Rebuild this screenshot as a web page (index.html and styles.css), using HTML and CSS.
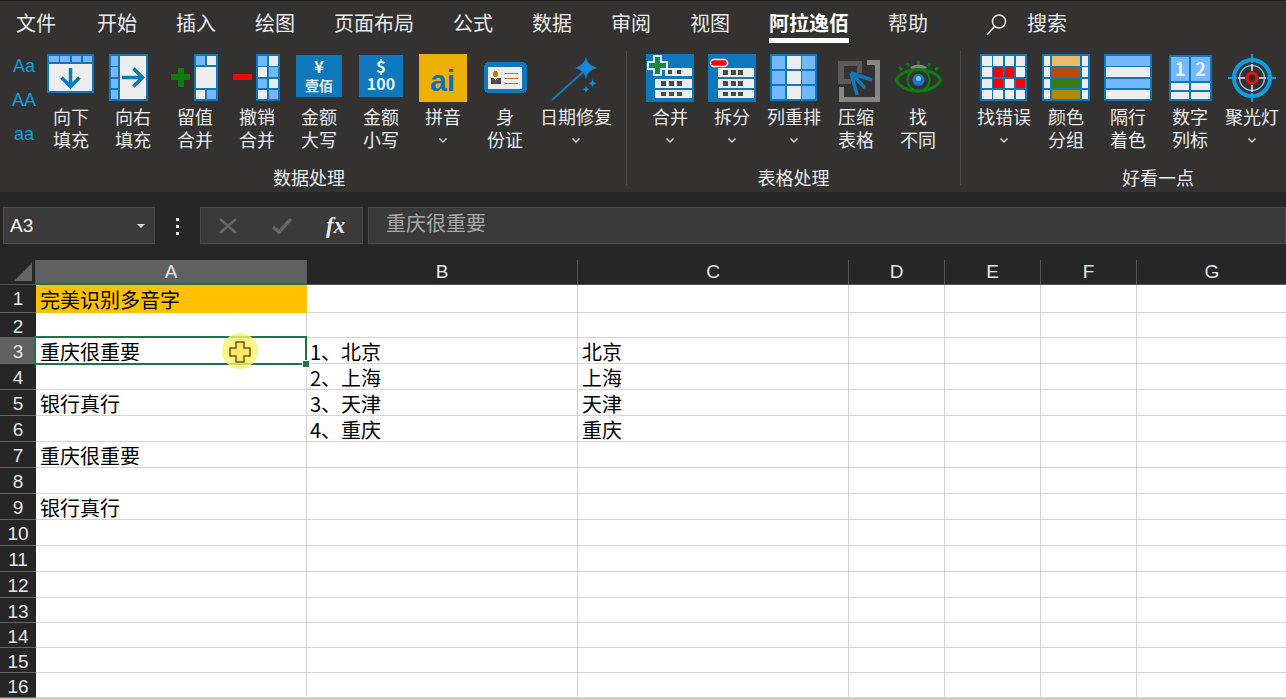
FILE: index.html
```html
<!DOCTYPE html>
<html lang="zh-CN">
<head>
  <meta charset="UTF-8">
  <title>Excel</title>
  <link rel="stylesheet" href="styles.css">
</head>
<body>
  <header class="ribbon">
    <nav class="tabs">
      <span class="tab tab-first">文件</span>
      <span class="tab">开始</span>
      <span class="tab">插入</span>
      <span class="tab">绘图</span>
      <span class="tab">页面布局</span>
      <span class="tab">公式</span>
      <span class="tab">数据</span>
      <span class="tab">审阅</span>
      <span class="tab">视图</span>
      <span class="tab tab-active">阿拉逸佰</span>
      <span class="tab">帮助</span>
      <span class="search">
        <svg class="search-icon" width="21" height="23" viewBox="0 0 21 23"><circle cx="13" cy="8.5" r="6.5"/><path d="M8.5 13.5 1 22"/></svg>
        <span class="tab">搜索</span>
      </span>
    </nav>

    <div class="groups">
      <section class="group group-data">
        <div class="items">
          <div class="case-stack"><span>Aa</span><span>AA</span><span>aa</span></div>

          <div class="item">
            <svg class="icon" viewBox="0 0 48 48">
              <rect class="ib" width="47" height="39"/>
              <rect class="is" x="2" y="2" width="10" height="6"/><rect class="is" x="13" y="2" width="10" height="6"/><rect class="is" x="25" y="2" width="9" height="6"/><rect class="is" x="36" y="2" width="9" height="6"/>
              <rect class="ip" x="2" y="10" width="43" height="27"/>
              <path class="arrow" d="M23.5 14V32M14.5 23.5 23.5 32.5 32.5 23.5"/>
            </svg>
            <div class="label">向下<br>填充</div>
          </div>

          <div class="item">
            <svg class="icon" viewBox="0 0 48 48">
              <rect class="ib" width="39" height="47"/>
              <rect class="is" x="2" y="2" width="7" height="10"/><rect class="is" x="2" y="13" width="7" height="10"/><rect class="is" x="2" y="25" width="7" height="9"/><rect class="is" x="2" y="36" width="7" height="9"/>
              <rect class="ip" x="11" y="2" width="26" height="43"/>
              <path class="arrow" d="M13 23.5H33M24.5 14.5 33.5 23.5 24.5 32.5"/>
            </svg>
            <div class="label">向右<br>填充</div>
          </div>

          <div class="item">
            <svg class="icon" viewBox="0 0 48 48">
              <rect class="ig" x="7" y="14" width="6" height="19"/><rect class="ig" y="20" width="19" height="6"/>
              <rect class="ib" x="23" width="24" height="47"/>
              <rect class="is" x="25" y="2" width="9" height="9"/><rect class="ip" x="36" y="2" width="9" height="9"/>
              <rect class="ip" x="25" y="13" width="20" height="21"/>
              <rect class="ip" x="25" y="36" width="9" height="9"/><rect class="is" x="36" y="36" width="9" height="9"/>
            </svg>
            <div class="label">留值<br>合并</div>
          </div>

          <div class="item">
            <svg class="icon" viewBox="0 0 48 48">
              <rect class="ir" y="20" width="19" height="6"/>
              <rect class="ib" x="23" width="24" height="47"/>
              <rect class="is" x="25" y="2" width="9" height="10"/><rect class="ip" x="36" y="2" width="9" height="10"/>
              <rect class="ip" x="25" y="13" width="9" height="10"/><rect class="is" x="36" y="13" width="9" height="10"/>
              <rect class="is" x="25" y="25" width="9" height="9"/><rect class="ip" x="36" y="25" width="9" height="9"/>
              <rect class="ip" x="25" y="36" width="9" height="9"/><rect class="is" x="36" y="36" width="9" height="9"/>
            </svg>
            <div class="label">撤销<br>合并</div>
          </div>

          <div class="item">
            <svg class="icon" viewBox="0 0 48 48">
              <rect class="ib" x="1" y="1" width="46" height="42"/>
              <text class="icon-text" x="24" y="19" font-size="17">¥</text>
              <text class="icon-text" x="24" y="37" font-size="14">壹佰</text>
            </svg>
            <div class="label">金额<br>大写</div>
          </div>

          <div class="item">
            <svg class="icon" viewBox="0 0 48 48">
              <rect class="ib" x="2" y="1" width="44" height="42"/>
              <text class="icon-text" x="24" y="19" font-size="17">$</text>
              <text class="icon-text" x="24" y="36" font-size="16">100</text>
            </svg>
            <div class="label">金额<br>小写</div>
          </div>

          <div class="item">
            <svg class="icon" viewBox="0 0 48 48">
              <rect class="iy" width="48" height="48"/>
              <text class="ai-text" x="23.5" y="37" font-size="30">ai</text>
            </svg>
            <div class="label">拼音</div>
            <svg class="chevron" viewBox="0 0 8 5"><path d="M.5.5 4 4 7.5.5"/></svg>
          </div>

          <div class="item">
            <svg class="icon" viewBox="0 0 48 48">
              <rect class="ib" x="3" y="8" width="43" height="31" rx="5"/>
              <rect class="ip" x="7" y="13" width="34" height="22"/>
              <circle class="io" cx="14.7" cy="20" r="2.7"/>
              <path class="id" d="M10 30V24H12.5L14.7 26 17 24H19.7V30Z"/>
              <rect class="io" x="24" y="19" width="13" height="1"/><rect class="io" x="24" y="24" width="13" height="1"/><rect class="io" x="24" y="29" width="13" height="1"/>
            </svg>
            <div class="label">身<br>份证</div>
          </div>

          <div class="item">
            <svg class="icon icon-smooth" viewBox="0 0 48 48">
              <path class="wand" d="M0 46 31 18"/>
              <path class="star" d="M34 3Q35.500 11.500 45 14 35.500 16 34 25 32 16 23 14 32 11.500 34 3Z"/>
              <path class="star" d="M40.500 25Q41 28.500 44.500 29.500 41 30 40.500 33.500 40 30 36.500 29.500 40 28.500 40.500 25Z"/>
              <path class="star" d="M34 32Q34.500 34.500 37 35.500 34.500 36 34 38.500 33.500 36 31 35.500 33.500 34.500 34 32Z"/>
            </svg>
            <div class="label">日期修复</div>
            <svg class="chevron" viewBox="0 0 8 5"><path d="M.5.5 4 4 7.5.5"/></svg>
          </div>
        </div>
        <div class="group-label">数据处理</div>
      </section>

      <section class="group group-table">
        <div class="items">
          <div class="item">
            <svg class="icon" viewBox="0 0 48 48">
              <rect class="ib" width="48" height="48"/>
              <rect class="ip" x="19" y="14" width="27" height="8"/><rect class="ip" x="9" y="25" width="37" height="9"/><rect class="ip" x="9" y="36" width="37" height="8"/>
              <rect class="id" x="22" y="16" width="4" height="4"/><rect class="id" x="31" y="16" width="4" height="4"/>
              <rect class="id" x="15" y="27" width="5" height="5"/><rect class="id" x="23" y="27" width="5" height="5"/><rect class="id" x="31" y="27" width="5" height="5"/>
              <rect class="id" x="15" y="38" width="5" height="4"/><rect class="id" x="23" y="38" width="5" height="4"/><rect class="id" x="31" y="38" width="5" height="4"/>
              <path class="plus-edge" d="M8 2H15V8H21V15H15V21H8V15H2V8H8Z"/>
            </svg>
            <div class="label">合并</div>
            <svg class="chevron" viewBox="0 0 8 5"><path d="M.5.5 4 4 7.5.5"/></svg>
          </div>

          <div class="item">
            <svg class="icon" viewBox="0 0 48 48">
              <rect class="ib" width="48" height="48"/>
              <rect class="ip" x="10" y="14" width="36" height="9"/><rect class="ip" x="10" y="25" width="36" height="9"/><rect class="ip" x="10" y="36" width="36" height="8"/>
              <rect class="id" x="15" y="16" width="5" height="5"/><rect class="id" x="23" y="16" width="5" height="5"/><rect class="id" x="30" y="16" width="5" height="5"/>
              <rect class="id" x="15" y="27" width="5" height="5"/><rect class="id" x="23" y="27" width="5" height="5"/><rect class="id" x="30" y="27" width="5" height="5"/>
              <rect class="id" x="15" y="38" width="5" height="4"/><rect class="id" x="23" y="38" width="5" height="4"/><rect class="id" x="30" y="38" width="5" height="4"/>
              <rect class="pill-edge" x="2.500" y="5.500" width="17" height="7" rx="3.500"/>
            </svg>
            <div class="label">拆分</div>
            <svg class="chevron" viewBox="0 0 8 5"><path d="M.5.5 4 4 7.5.5"/></svg>
          </div>

          <div class="item">
            <svg class="icon" viewBox="0 0 48 48">
              <rect class="ib" width="47" height="47"/>
              <rect class="is" x="2" y="2" width="13" height="13"/><rect class="ip" x="17" y="2" width="14" height="13"/><rect class="is" x="32" y="2" width="13" height="13"/>
              <rect class="is" x="2" y="17" width="13" height="13"/><rect class="ip" x="17" y="17" width="14" height="13"/><rect class="is" x="32" y="17" width="13" height="13"/>
              <rect class="is" x="2" y="32" width="13" height="13"/><rect class="ip" x="17" y="32" width="14" height="13"/><rect class="is" x="32" y="32" width="13" height="13"/>
            </svg>
            <div class="label">列重排</div>
            <svg class="chevron" viewBox="0 0 8 5"><path d="M.5.5 4 4 7.5.5"/></svg>
          </div>

          <div class="item">
            <svg class="icon icon-smooth" viewBox="0 0 48 48">
              <path class="ic" d="M35 6H48V48H7V33H12V43H43V11H35Z"/>
              <path class="ik" d="M6 7H30V19H25V12H12V25H19V30H6Z"/>
              <path class="squeeze" d="M19 19 40 26M19 19 25 41M19 19 33 34"/>
            </svg>
            <div class="label">压缩<br>表格</div>
          </div>

          <div class="item">
            <svg class="icon icon-smooth" viewBox="0 0 48 48">
              <path class="eye-lid" d="M16 13Q24 8 33 13L31 16H18Z"/>
              <path class="eye" d="M2 26C10 12 38 12 47 26 38 41 10 41 2 26Z"/>
              <circle class="eye-ring" cx="24.500" cy="26" r="11"/>
              <circle class="eye-iris" cx="24.500" cy="26" r="6"/>
              <circle class="eye-spot" cx="24.500" cy="24.500" r="2.500"/>
              <path class="eye" d="M8 16 5 13M15 12 13 9M24.500 10V7M34 12 36 9M41 16 44 13"/>
            </svg>
            <div class="label">找<br>不同</div>
          </div>
        </div>
        <div class="group-label">表格处理</div>
      </section>

      <section class="group group-look">
        <div class="items">
          <div class="item">
            <svg class="icon" viewBox="0 0 48 48">
              <rect class="ib" width="47" height="47"/>
              <rect class="ip" x="2" y="2" width="10" height="10"/><rect class="ip" x="13" y="2" width="10" height="10"/><rect class="ip" x="25" y="2" width="9" height="10"/><rect class="ip" x="36" y="2" width="9" height="10"/>
              <rect class="ip" x="2" y="13" width="10" height="10"/><rect class="ir" x="13" y="13" width="10" height="10"/><rect class="ir" x="25" y="13" width="9" height="10"/><rect class="ip" x="36" y="13" width="9" height="10"/>
              <rect class="ip" x="2" y="25" width="10" height="9"/><rect class="ir" x="13" y="25" width="10" height="9"/><rect class="ip" x="25" y="25" width="9" height="9"/><rect class="ir" x="36" y="25" width="9" height="9"/>
              <rect class="ip" x="2" y="36" width="10" height="9"/><rect class="ip" x="13" y="36" width="10" height="9"/><rect class="ip" x="25" y="36" width="9" height="9"/><rect class="ip" x="36" y="36" width="9" height="9"/>
            </svg>
            <div class="label">找错误</div>
            <svg class="chevron" viewBox="0 0 8 5"><path d="M.5.5 4 4 7.5.5"/></svg>
          </div>

          <div class="item">
            <svg class="icon" viewBox="0 0 48 48">
              <rect class="ib" width="48" height="47"/>
              <rect class="ip" x="2" y="2" width="6" height="10"/><rect class="band-a" x="10" y="2" width="28" height="10"/><rect class="ip" x="40" y="2" width="6" height="10"/>
              <rect class="ip" x="2" y="13" width="6" height="10"/><rect class="band-b" x="10" y="13" width="28" height="10"/><rect class="ip" x="40" y="13" width="6" height="10"/>
              <rect class="ip" x="2" y="25" width="6" height="9"/><rect class="band-c" x="10" y="25" width="28" height="9"/><rect class="ip" x="40" y="25" width="6" height="9"/>
              <rect class="ip" x="2" y="36" width="6" height="9"/><rect class="band-d" x="10" y="36" width="28" height="9"/><rect class="ip" x="40" y="36" width="6" height="9"/>
            </svg>
            <div class="label">颜色<br>分组</div>
          </div>

          <div class="item">
            <svg class="icon" viewBox="0 0 48 48">
              <rect class="ib" width="48" height="47"/>
              <rect class="is" x="2" y="2" width="44" height="10"/><rect class="ip" x="2" y="13" width="44" height="10"/>
              <rect class="is" x="2" y="25" width="44" height="9"/><rect class="ip" x="2" y="36" width="44" height="9"/>
            </svg>
            <div class="label">隔行<br>着色</div>
          </div>

          <div class="item">
            <svg class="icon" viewBox="0 0 48 48">
              <rect class="ib" x="3" y="1" width="43" height="46"/>
              <rect class="is" x="5" y="3" width="18" height="24"/><rect class="is" x="25" y="3" width="19" height="24"/>
              <text class="icon-text" x="14" y="22" font-size="18">1</text>
              <text class="icon-text" x="34.500" y="22" font-size="18">2</text>
              <rect class="ip" x="5" y="29" width="18" height="7"/><rect class="ip" x="25" y="29" width="19" height="7"/>
              <rect class="ip" x="5" y="38" width="18" height="7"/><rect class="ip" x="25" y="38" width="19" height="7"/>
            </svg>
            <div class="label">数字<br>列标</div>
          </div>

          <div class="item">
            <svg class="icon icon-smooth" viewBox="0 0 48 48">
              <circle class="spot-outer" cx="24" cy="24" r="18"/>
              <circle class="spot-mid" cx="24" cy="24" r="12.500"/>
              <path class="spot-cross" d="M24 0V9M24 39V48M0 24H9M39 24H48"/>
              <path class="spot-tick" d="M24 10V17M24 31V38M10 24H17M31 24H38"/>
              <circle class="spot-dark" cx="24" cy="24" r="3"/>
              <circle class="spot-red" cx="24" cy="24" r="5"/>
            </svg>
            <div class="label">聚光灯</div>
            <svg class="chevron" viewBox="0 0 8 5"><path d="M.5.5 4 4 7.5.5"/></svg>
          </div>
        </div>
        <div class="group-label">好看一点</div>
      </section>
    </div>
  </header>

  <div class="formula-bar">
    <div class="name-box">A3<span class="caret"></span></div>
    <div class="grip"><span></span><span></span><span></span></div>
    <div class="fx-buttons">
      <svg class="fx-mark" width="20" height="16" viewBox="0 0 20 16"><path d="M2 1 18 15M18 1 2 15"/></svg>
      <svg class="fx-mark" width="20" height="16" viewBox="0 0 20 16"><path class="fx-check" d="M1 9 7 14 19 1"/></svg>
      <span class="fx-label">fx</span>
    </div>
    <div class="formula-input">重庆很重要</div>
  </div>

  <main class="sheet">
    <div class="corner"><svg width="18" height="18" viewBox="0 0 18 18"><path d="M18 0V18H0Z"/></svg></div>
    <div class="col-head col-head-on">A</div><div class="col-head">B</div><div class="col-head">C</div><div class="col-head">D</div><div class="col-head">E</div><div class="col-head">F</div><div class="col-head">G</div>

    <div class="row-head">1</div><div class="cell cell-title">完美识别多音字</div><div class="cell"></div><div class="cell"></div><div class="cell"></div><div class="cell"></div><div class="cell"></div><div class="cell"></div>
    <div class="row-head">2</div><div class="cell"></div><div class="cell"></div><div class="cell"></div><div class="cell"></div><div class="cell"></div><div class="cell"></div><div class="cell"></div>
    <div class="row-head row-head-on">3</div><div class="cell">重庆很重要</div><div class="cell cell-b">1、北京</div><div class="cell">北京</div><div class="cell"></div><div class="cell"></div><div class="cell"></div><div class="cell"></div>
    <div class="row-head">4</div><div class="cell"></div><div class="cell cell-b">2、上海</div><div class="cell">上海</div><div class="cell"></div><div class="cell"></div><div class="cell"></div><div class="cell"></div>
    <div class="row-head">5</div><div class="cell">银行真行</div><div class="cell cell-b">3、天津</div><div class="cell">天津</div><div class="cell"></div><div class="cell"></div><div class="cell"></div><div class="cell"></div>
    <div class="row-head">6</div><div class="cell"></div><div class="cell cell-b">4、重庆</div><div class="cell">重庆</div><div class="cell"></div><div class="cell"></div><div class="cell"></div><div class="cell"></div>
    <div class="row-head">7</div><div class="cell">重庆很重要</div><div class="cell"></div><div class="cell"></div><div class="cell"></div><div class="cell"></div><div class="cell"></div><div class="cell"></div>
    <div class="row-head">8</div><div class="cell"></div><div class="cell"></div><div class="cell"></div><div class="cell"></div><div class="cell"></div><div class="cell"></div><div class="cell"></div>
    <div class="row-head">9</div><div class="cell">银行真行</div><div class="cell"></div><div class="cell"></div><div class="cell"></div><div class="cell"></div><div class="cell"></div><div class="cell"></div>
    <div class="row-head">10</div><div class="cell"></div><div class="cell"></div><div class="cell"></div><div class="cell"></div><div class="cell"></div><div class="cell"></div><div class="cell"></div>
    <div class="row-head">11</div><div class="cell"></div><div class="cell"></div><div class="cell"></div><div class="cell"></div><div class="cell"></div><div class="cell"></div><div class="cell"></div>
    <div class="row-head">12</div><div class="cell"></div><div class="cell"></div><div class="cell"></div><div class="cell"></div><div class="cell"></div><div class="cell"></div><div class="cell"></div>
    <div class="row-head">13</div><div class="cell"></div><div class="cell"></div><div class="cell"></div><div class="cell"></div><div class="cell"></div><div class="cell"></div><div class="cell"></div>
    <div class="row-head">14</div><div class="cell"></div><div class="cell"></div><div class="cell"></div><div class="cell"></div><div class="cell"></div><div class="cell"></div><div class="cell"></div>
    <div class="row-head">15</div><div class="cell"></div><div class="cell"></div><div class="cell"></div><div class="cell"></div><div class="cell"></div><div class="cell"></div><div class="cell"></div>
    <div class="row-head">16</div><div class="cell"></div><div class="cell"></div><div class="cell"></div><div class="cell"></div><div class="cell"></div><div class="cell"></div><div class="cell"></div>

    <!-- selection and recording cursor sit on top of the grid -->
    <div class="selection"></div>
    <div class="handle"></div>
    <div class="halo"></div>
    <svg class="pointer" width="22" height="22" viewBox="0 0 22 22"><path d="M7 1H15V7H21V15H15V21H7V15H1V7H7Z"/></svg>
  </main>
</body>
</html>
```

FILE: styles.css
```css
* {
  box-sizing: border-box;
}
body {
  margin: 0;
  width: 1286px;
  height: 699px;
  overflow: hidden;
  background-color: #262626;
  font-family: "Noto Sans CJK SC", sans-serif;
  color: #ebebeb;
}

/* Ribbon */
.ribbon {
  height: 192px;
  background-color: #333231;
  border-top: 1px solid #1c1c1c;
  overflow: hidden;
}
.tabs {
  display: flex;
  gap: 39px;
  height: 45px;
  padding-left: 16px;
}
.tab {
  height: 37px;
  font-size: 20px;
  line-height: 44px;
  white-space: nowrap;
}
.tab-first {
  margin-right: 2px;
}
.tab-active {
  font-weight: bold;
  color: #ffffff;
  box-shadow: 0 5px 0 #ffffff;
}
.search {
  display: flex;
  gap: 20px;
  margin-left: 19px;
}
.search-icon {
  margin-top: 12px;
  fill: none;
  stroke: #e6e6e6;
  stroke-width: 1.5;
}
.groups {
  display: flex;
  margin-top: 5px;
}
.group {
  flex: none;
  height: 134px;
  padding-top: 3px;
  border-right: 1px solid #4a4a4a;
}
.group-data {
  width: 627px;
}
.group-table {
  width: 334px;
  padding-left: 12px;
}
.group-look {
  width: 394px;
  padding-left: 12px;
  border-right: none;
}
.items {
  display: flex;
  height: 113px;
}
.case-stack {
  display: flex;
  flex-direction: column;
  gap: 10px;
  width: 40px;
  padding-left: 4px;
  font-family: "Liberation Sans", sans-serif;
  font-size: 18px;
  line-height: 24px;
  text-align: center;
  color: #0a9fe0;
}
.case-stack span {
  width: 40px;
  margin-left: -4px;
  padding-left: 8px;
}
.item {
  display: flex;
  flex-direction: column;
  align-items: center;
  flex: none;
  width: 62px;
}
.group-data .item:last-child {
  width: 80px;
}
.icon {
  flex: none;
  width: 48px;
  height: 48px;
  overflow: visible;
  shape-rendering: crispEdges;
}
.icon-smooth {
  shape-rendering: auto;
}
.label {
  margin-top: 3px;
  font-size: 18px;
  line-height: 23px;
  text-align: center;
  white-space: nowrap;
}
.chevron {
  width: 8px;
  height: 5px;
  margin-top: 10px;
  fill: none;
  stroke: #e6e6e6;
  stroke-width: 1.4;
}
.group-label {
  height: 18px;
  font-size: 18px;
  line-height: 20px;
  text-align: center;
}
.group-data .group-label {
  padding-right: 8px;
}
.group-table .group-label,
.group-look .group-label {
  margin-left: -12px;
}

/* Icon colours */
.ib { fill: #0e78bd; }
.is { fill: #74b8ff; }
.ip { fill: #eeeeee; }
.ig { fill: #0a7d0a; }
.ir { fill: #ff0000; }
.iy { fill: #edb000; }
.io { fill: #c8780a; }
.id { fill: #4a4a4a; }
.ic { fill: #868686; }
.ik { fill: #5f5859; }
.band-a { fill: #edb969; }
.band-b { fill: #b84c0a; }
.band-c { fill: #3a7a0a; }
.band-d { fill: #b48a00; }
.arrow {
  fill: none;
  stroke: #0e78bd;
  stroke-width: 3.5;
  shape-rendering: auto;
}
.icon-text {
  fill: #e4f1fb;
  font-family: "Noto Sans CJK SC", sans-serif;
  font-weight: bold;
  text-anchor: middle;
}
.ai-text {
  fill: #0f6fc0;
  font-family: "Liberation Sans", sans-serif;
  font-weight: bold;
  text-anchor: middle;
}
.plus-edge {
  fill: #0f8a4a;
  stroke: #eeeeee;
  stroke-width: 1.5;
}
.pill-edge {
  fill: #ff0000;
  stroke: #eeeeee;
  stroke-width: 1.5;
  shape-rendering: auto;
}
.wand {
  fill: none;
  stroke: #0e78bd;
  stroke-width: 2;
}
.star { fill: #1a86d6; }
.squeeze {
  fill: none;
  stroke: #0e78bd;
  stroke-width: 3.5;
}
.eye {
  fill: none;
  stroke: #0a7d0a;
  stroke-width: 3;
}
.eye-lid { fill: #868686; }
.eye-ring {
  fill: none;
  stroke: #0a7d0a;
  stroke-width: 2;
}
.eye-iris { fill: #1a78cc; }
.eye-spot { fill: #7cc0f5; }
.spot-outer {
  fill: none;
  stroke: #0a9fe0;
  stroke-width: 4;
}
.spot-mid {
  fill: none;
  stroke: #74b8ff;
  stroke-width: 1.5;
}
.spot-cross {
  fill: none;
  stroke: #0a9fe0;
  stroke-width: 2;
}
.spot-tick {
  fill: none;
  stroke: #eeeeee;
  stroke-width: 1.5;
}
.spot-dark { fill: #3a2a20; }
.spot-red {
  fill: none;
  stroke: #ee1111;
  stroke-width: 3;
}

/* Formula bar */
.formula-bar {
  display: flex;
  height: 68px;
  padding: 15px 0 0 3px;
}
.name-box,
.fx-buttons,
.formula-input {
  height: 37px;
  background-color: #3a3a3a;
  border: 1px solid #4a4a4a;
}
.name-box {
  display: flex;
  align-items: center;
  justify-content: space-between;
  width: 152px;
  padding: 0 9px 0 6px;
  font-family: "Liberation Sans", sans-serif;
  font-size: 19px;
  color: #ffffff;
}
.caret {
  border-top: 4px solid #e6e6e6;
  border-left: 4px solid transparent;
  border-right: 4px solid transparent;
}
.grip {
  display: flex;
  flex-direction: column;
  align-items: center;
  gap: 4px;
  width: 45px;
  padding-top: 11px;
}
.grip span {
  width: 3px;
  height: 3px;
  background-color: #e6e6e6;
}
.fx-buttons {
  display: flex;
  align-items: center;
  gap: 34px;
  width: 163px;
  margin-right: 5px;
  padding-left: 17px;
}
.fx-mark {
  fill: none;
  stroke: #666666;
  stroke-width: 2.500;
}
.fx-check {
  stroke-width: 3.500;
}
.fx-label {
  font-family: "Liberation Serif", serif;
  font-size: 23px;
  font-style: italic;
  font-weight: bold;
  color: #e8e8e8;
}
.formula-input {
  flex: 1;
  padding-left: 17px;
  font-size: 20px;
  line-height: 30px;
  color: #a8a8a8;
}

/* Sheet */
.sheet {
  position: relative;
  display: grid;
  grid-template-columns: 36px 271px 271px 271px 96px 96px 96px 151px;
  grid-template-rows: 25px 28px 25px repeat(10, 26px) repeat(4, 25px);
  height: 439px;
  background-color: #c8c8c8;
}
.corner {
  display: flex;
  padding: 3px 0 0 14px;
  background-color: #262626;
  border-right: 1px solid #555555;
  border-bottom: 1px solid #555555;
}
.corner svg {
  fill: #666666;
}
.col-head {
  font-family: "Liberation Sans", sans-serif;
  font-size: 19px;
  line-height: 24px;
  text-align: center;
  color: #e8e8e8;
  background-color: #262626;
  border-right: 1px solid #555555;
  border-bottom: 1px solid #555555;
}
.col-head-on {
  background-color: #606060;
  border-bottom: 2px solid #217346;
}
.row-head {
  font-family: "Liberation Sans", sans-serif;
  font-size: 19px;
  line-height: 28px;
  text-align: center;
  color: #e8e8e8;
  background-color: #262626;
  border-bottom: 1px solid #666666;
  overflow: hidden;
}
.row-head-on {
  background-color: #606060;
}
.cell {
  padding-left: 4px;
  font-size: 20px;
  line-height: 27px;
  color: #000000;
  background-color: #ffffff;
  border-right: 1px solid #d4d4d4;
  border-bottom: 1px solid #d4d4d4;
  white-space: nowrap;
}
.cell-title {
  line-height: 30px;
  background-color: #ffc000;
  border-color: #ffc000;
}
.cell-b {
  padding-left: 3px;
}
.selection {
  position: absolute;
  left: 34px;
  top: 76px;
  width: 273px;
  height: 29px;
  border: 2px solid #217346;
}
.handle {
  position: absolute;
  left: 302px;
  top: 100px;
  width: 8px;
  height: 8px;
  background-color: #217346;
  border: 1px solid #ffffff;
}
.halo {
  position: absolute;
  left: 222px;
  top: 73px;
  width: 36px;
  height: 36px;
  border-radius: 50%;
  background-color: #fdf36c;
  opacity: 0.8;
}
.pointer {
  position: absolute;
  left: 229px;
  top: 81px;
  fill: #fde66b;
  stroke: #6b5a00;
  stroke-width: 1.5;
}
```
